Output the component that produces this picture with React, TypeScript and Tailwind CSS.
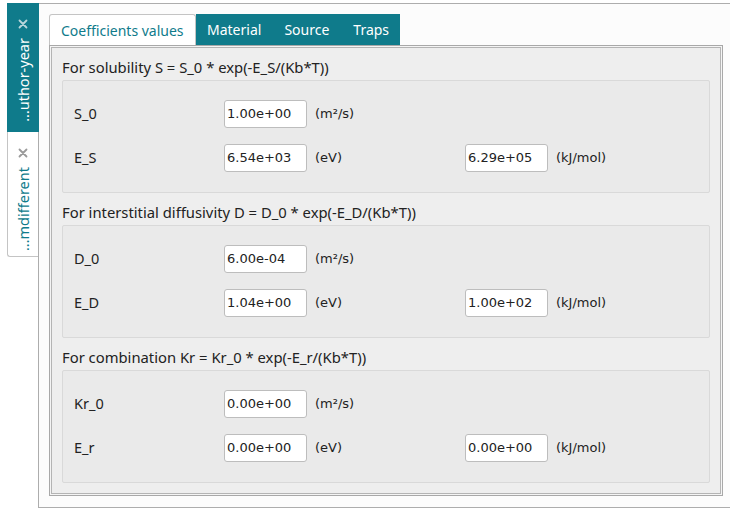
import React from "react";

const TEAL = "bg-[#0f7b8b]";

function CloseGlyph({ className }: { className: string }) {
    return (
        <svg width="10" height="10" viewBox="0 0 10 10" className={className}>
            <path d="M1.5 1.5 L8.5 8.5 M8.5 1.5 L1.5 8.5" stroke="currentColor" strokeWidth="1.8" strokeLinecap="round" />
        </svg>
    );
}

function SideTab({ label, active }: { label: string; active?: boolean }) {
    return (
        <div
            className={
                active
                    ? `${TEAL} text-white h-[129px] w-[32px] flex flex-col items-center pt-[16px] relative z-10`
                    : "bg-white text-[#0f7b8b] h-[125px] w-[31px] flex flex-col items-center pt-[16px] border-l border-b border-[#c4c4c4] rounded-bl-[3px]"
            }
        >
            <CloseGlyph className={active ? "text-[#b9d6db]" : "text-[#9a9a9a]"} />
            <span className="mt-[9px] text-[14.5px] leading-none [writing-mode:vertical-rl] rotate-180 whitespace-nowrap">
                {label}
            </span>
        </div>
    );
}

interface Row {
    name: string;
    value: string;
    unit: string;
    kj?: string;
}

function Section({ title, rows }: { title: string; rows: Row[] }) {
    return (
        <div className="flex flex-col">
            <div className="h-5 leading-5 text-[14.8px] text-[#222]">{title}</div>
            <div className="mt-[3px] h-[113px] bg-[#eaeaea] border border-[#d9d9d9] rounded-[2px] px-[11px] pt-[19px] flex flex-col gap-[16px]">
                {rows.map((r) => (
                    <div key={r.name} className="flex items-center h-[28px]">
                        <div className="w-[150px] text-[14.5px] text-[#222]">{r.name}</div>
                        <div className="w-[83px] h-[28px] bg-white border border-[#bdbdbd] rounded-[3px] flex items-center pl-[2px] font-['DejaVu_Sans'] text-[13px] text-[#222]">
                            {r.value}
                        </div>
                        <div className="w-[158px] pl-[8px] font-['DejaVu_Sans'] text-[13px] text-[#222]">{r.unit}</div>
                        {r.kj && (
                            <>
                                <div className="w-[83px] h-[28px] bg-white border border-[#bdbdbd] rounded-[3px] flex items-center pl-[2px] font-['DejaVu_Sans'] text-[13px] text-[#222]">
                                    {r.kj}
                                </div>
                                <div className="pl-[8px] font-['DejaVu_Sans'] text-[13px] text-[#222]">(kJ/mol)</div>
                            </>
                        )}
                    </div>
                ))}
            </div>
        </div>
    );
}

export default function App() {
    return (
        <div className="w-[730px] h-[513px] bg-white flex font-['Noto_Sans',sans-serif] overflow-hidden">
            {/* Vertical tabs */}
            <div className="w-[38px] pl-[7px] pt-[3px] flex flex-col">
                <SideTab label="…uthor-year" active />
                <SideTab label="…mdifferent" />
            </div>

            {/* Panel */}
            <div className="mt-[3px] h-[505px] flex-1 bg-[#fcfcfc] border-t border-l border-b border-[#adadad] pl-[10px] pt-[10px]">
                {/* Tab bar */}
                <div className="flex h-[31px] text-[14px]">
                    <div className="bg-white border border-b-0 border-[#c4c4c4] rounded-t-[3px] px-[11px] flex items-center text-[#0f7b8b] w-[147px]">
                        Coefficients values
                    </div>
                    <div className={`${TEAL} text-white flex items-center px-[11px]`}>Material</div>
                    <div className={`${TEAL} text-white flex items-center px-[12px]`}>Source</div>
                    <div className={`${TEAL} text-white flex items-center pl-[12px] pr-[11px]`}>Traps</div>
                </div>

                {/* Frame */}
                <div className="w-[674px] h-[451px] border border-[#a8a8a8] p-px bg-[#f4f4f4]">
                    <div className="h-full border border-[#b4b4b4] bg-[#eeeeee] pt-[9px] pl-[10px] pr-[10px] flex flex-col gap-[9px]">
                        <Section
                            title="For solubility S = S_0 * exp(-E_S/(Kb*T))"
                            rows={[
                                { name: "S_0", value: "1.00e+00", unit: "(m²/s)" },
                                { name: "E_S", value: "6.54e+03", unit: "(eV)", kj: "6.29e+05" },
                            ]}
                        />
                        <Section
                            title="For interstitial diffusivity D = D_0 * exp(-E_D/(Kb*T))"
                            rows={[
                                { name: "D_0", value: "6.00e-04", unit: "(m²/s)" },
                                { name: "E_D", value: "1.04e+00", unit: "(eV)", kj: "1.00e+02" },
                            ]}
                        />
                        <Section
                            title="For combination Kr = Kr_0 * exp(-E_r/(Kb*T))"
                            rows={[
                                { name: "Kr_0", value: "0.00e+00", unit: "(m²/s)" },
                                { name: "E_r", value: "0.00e+00", unit: "(eV)", kj: "0.00e+00" },
                            ]}
                        />
                    </div>
                </div>
            </div>
        </div>
    );
}
